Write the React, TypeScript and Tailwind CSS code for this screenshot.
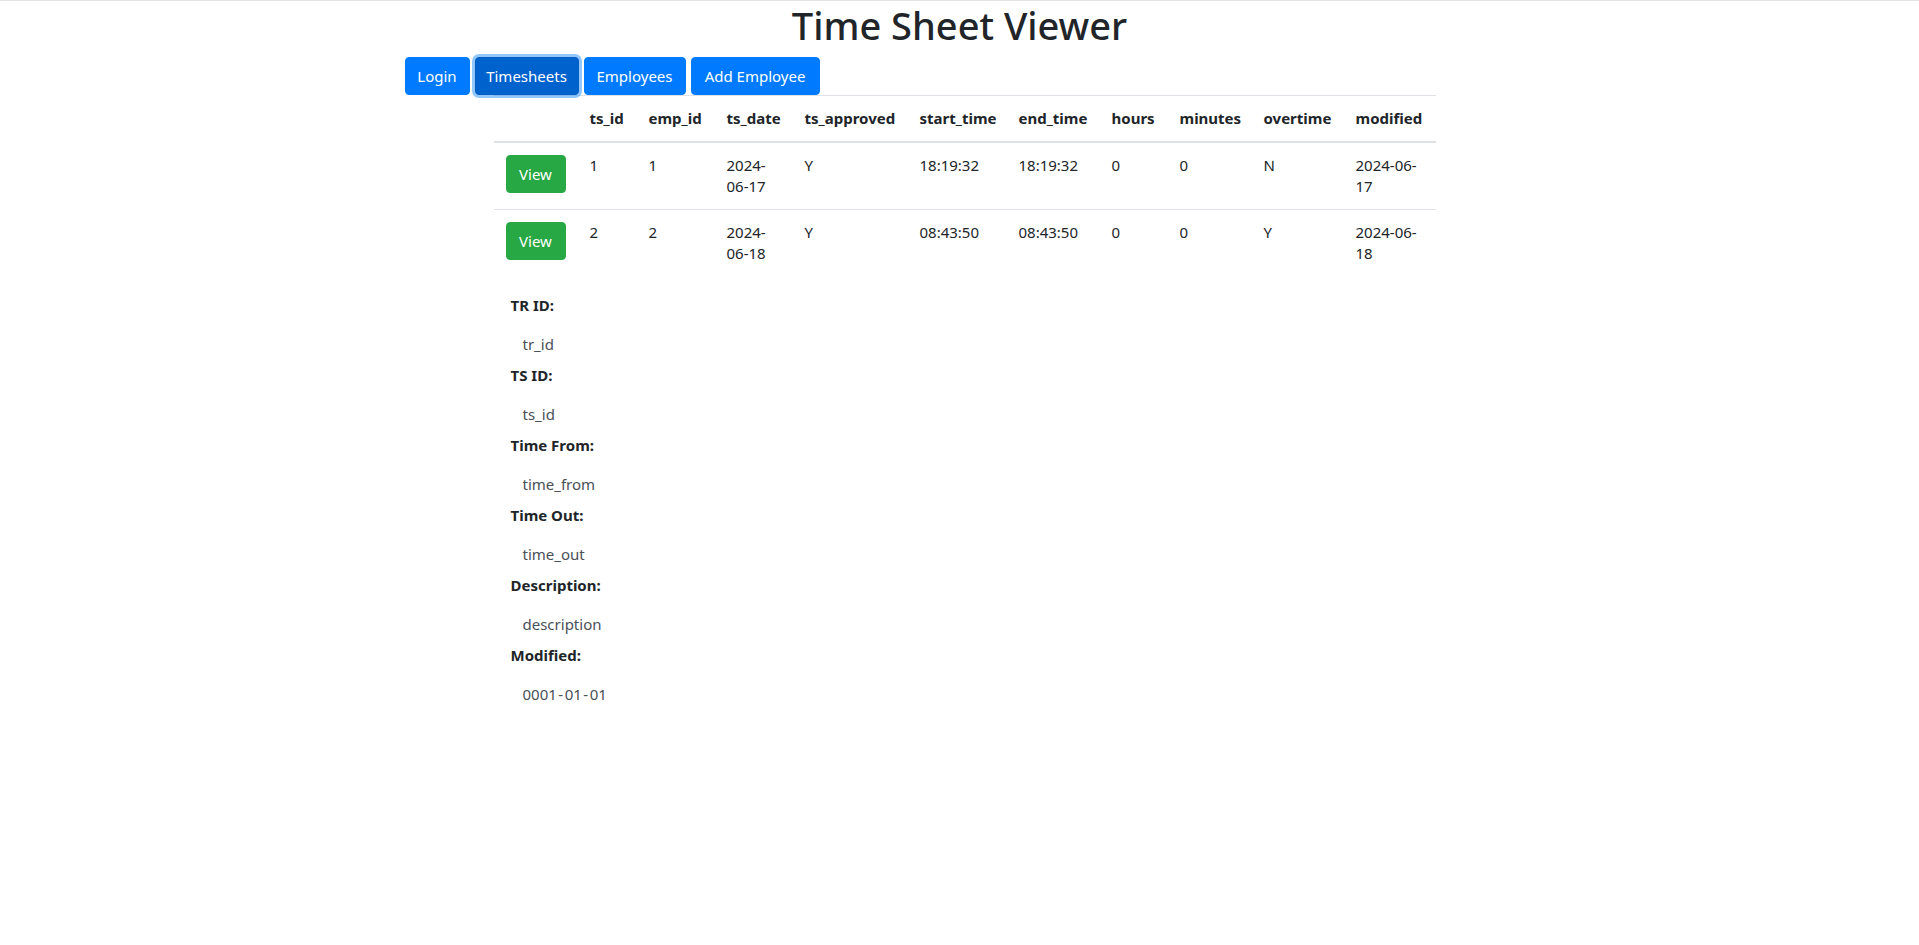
import React from "react";

const headers = [
  "",
  "ts_id",
  "emp_id",
  "ts_date",
  "ts_approved",
  "start_time",
  "end_time",
  "hours",
  "minutes",
  "overtime",
  "modified",
];

const rows = [
  ["1", "1", "2024-06-17", "Y", "18:19:32", "18:19:32", "0", "0", "N", "2024-06-17"],
  ["2", "2", "2024-06-18", "Y", "08:43:50", "08:43:50", "0", "0", "Y", "2024-06-18"],
];

const widths = [84, 59, 78, 78, 115, 99, 93, 68, 84, 92, 92];

const details: [string, React.ReactNode][] = [
  ["TR ID:", "tr_id"],
  ["TS ID:", "ts_id"],
  ["Time From:", "time_from"],
  ["Time Out:", "time_out"],
  ["Description:", "description"],
  [
    "Modified:",
    <span>
      0001<span className="mx-[1.5px]">-</span>01<span className="mx-[1.5px]">-</span>01
    </span>,
  ],
];

export default function App() {
  return (
    <div
      className="min-h-screen bg-white border-t border-[#e3e3e3] text-[#212529]"
      style={{ fontFamily: '"Segoe UI", "Noto Sans", "Open Sans", sans-serif' }}
    >
      <h1 className="text-center text-[38px] font-medium leading-[48px] mb-2">
        Time Sheet Viewer
      </h1>
      <div className="w-[1140px] mx-auto px-[15px]">
        <div className="flex gap-[5px] text-[15px] leading-[24px] text-white">
          <button className="w-[65px] h-[38px] rounded-[4px] bg-[#007bff] border border-[#007bff]">
            Login
          </button>
          <button className="w-[104px] h-[38px] rounded-[4px] bg-[#0062cc] border border-[#005cbf] shadow-[0_0_0_3px_rgba(38,143,255,0.5)]">
            Timesheets
          </button>
          <button className="w-[102px] h-[38px] rounded-[4px] bg-[#007bff] border border-[#007bff]">
            Employees
          </button>
          <button className="w-[129px] h-[38px] rounded-[4px] bg-[#007bff] border border-[#007bff]">
            Add Employee
          </button>
        </div>

        <table className="ml-[89px] w-[942px] table-fixed border-separate border-spacing-0 mb-4 text-[15px] leading-[21px]">
          <colgroup>
            {widths.map((w, i) => (
              <col key={i} style={{ width: w }} />
            ))}
          </colgroup>
          <thead>
            <tr>
              {headers.map((h, i) => (
                <th
                  key={i}
                  className="p-3 text-left font-bold align-bottom whitespace-nowrap border-t border-b-2 border-[#dee2e6]"
                >
                  {h}
                </th>
              ))}
            </tr>
          </thead>
          <tbody>
            {rows.map((r, ri) => (
              <tr key={ri}>
                <td
                  className={
                    ri > 0
                      ? "p-3 align-top border-t border-[#dee2e6]"
                      : "p-3 align-top"
                  }
                >
                  <button className="w-[60px] h-[38px] rounded-[4px] bg-[#28a745] border border-[#28a745] text-white text-[15px] leading-[24px]">
                    View
                  </button>
                </td>
                {r.map((c, ci) => (
                  <td
                    key={ci}
                    className={
                      ri > 0
                        ? "p-3 align-top border-t border-[#dee2e6]"
                        : "p-3 align-top"
                    }
                  >
                    {c}
                  </td>
                ))}
              </tr>
            ))}
          </tbody>
        </table>

        <div className="ml-[106px] pt-[1px] flex flex-col">
          {details.map(([label, value], i) => (
            <div key={i} className="flex flex-col">
              <div className="font-bold text-[15px] leading-[24px] mb-2">{label}</div>
              <div className="h-[38px] px-3 py-[7px] text-[15px] leading-[24px] text-[#495057]">
                {value}
              </div>
            </div>
          ))}
        </div>
      </div>
    </div>
  );
}
